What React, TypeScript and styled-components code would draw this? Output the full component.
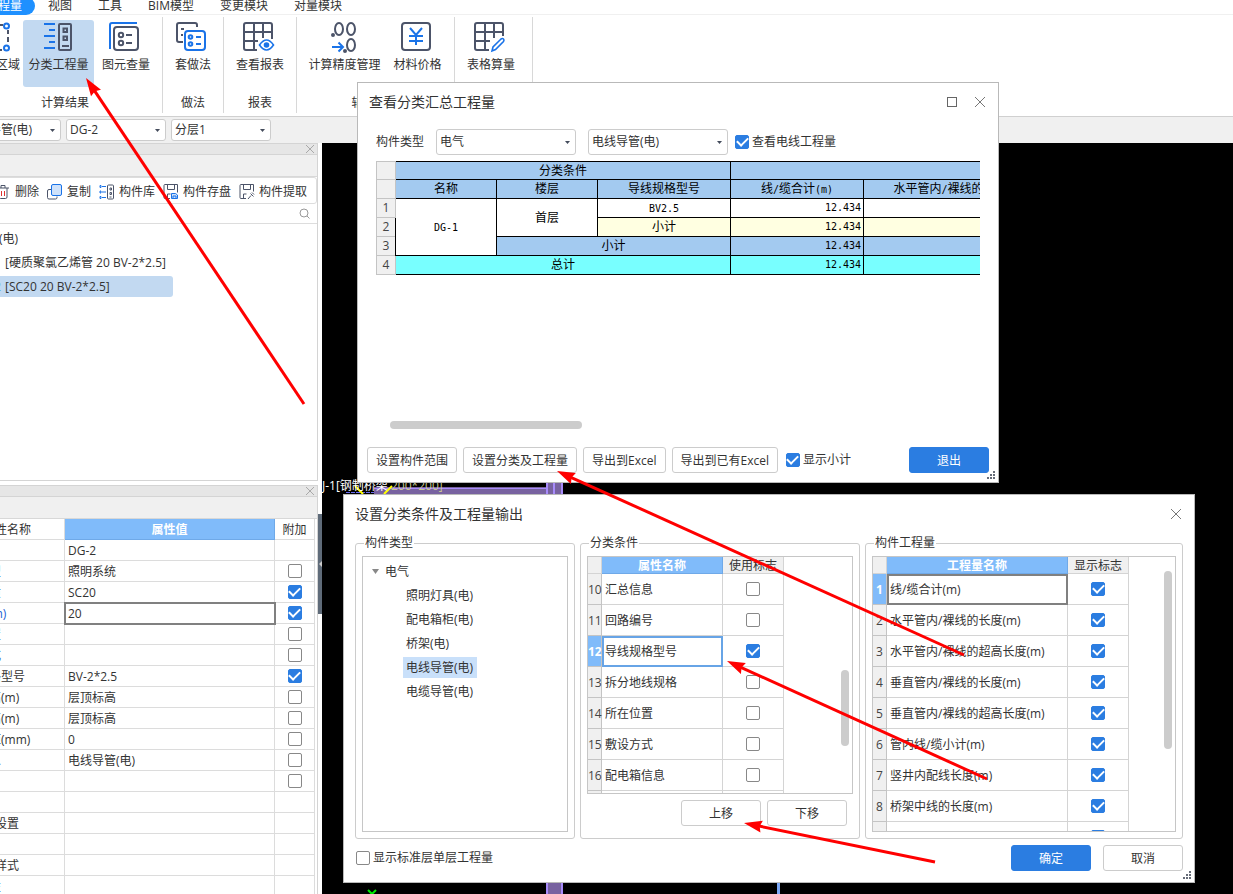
import React from 'react';
import styled, { createGlobalStyle, css } from 'styled-components';

const UI_FONT = '"Open Sans", "Noto Sans CJK SC", sans-serif';
const GRID_FONT = '"DejaVu Sans Mono", "Noto Sans CJK SC", monospace';

const GlobalStyle = createGlobalStyle`
  * { box-sizing: border-box; }
  body { margin: 0; }
  body, button, input, select, table {
    font-family: ${UI_FONT};
    font-size: 12px;
    line-height: 18px;
    color: #333;
  }
  button { padding: 0; margin: 0; cursor: default; }
`;

/* ---------- shared controls ---------- */

const Tick = styled.input.attrs({ type: 'checkbox' })`
  appearance: none;
  display: inline-grid;
  place-items: center;
  flex: none;
  width: 14px;
  height: 14px;
  margin: 0;
  border: 1px solid #888;
  border-radius: 2px;
  background: #fff;
  vertical-align: middle;
  td > & { display: grid; margin: 0 auto; }
  &:checked { background: #2b7de1; border-color: #2b7de1; }
  &:checked::before {
    content: '';
    width: 9px;
    height: 5px;
    margin-bottom: 3px;
    border-left: 2px solid #fff;
    border-bottom: 2px solid #fff;
    transform: rotate(-45deg);
  }
`;

const TickLabel = styled.label`
  display: flex;
  align-items: center;
  gap: 3px;
  white-space: nowrap;
`;

const SelectWrap = styled.span<{ $w: number; $h: number }>`
  display: grid;
  align-items: center;
  flex: none;
  width: ${(p) => p.$w}px;
  height: ${(p) => p.$h}px;
  select, svg { grid-area: 1 / 1; }
  svg { justify-self: end; margin-right: 6px; pointer-events: none; }
`;

const SelectField = styled.select`
  appearance: none;
  width: 100%;
  height: 100%;
  padding: 0 3px;
  border: 1px solid #ccc;
  border-radius: 3px;
  background: #fff;
`;

function Select({ value, label, w, h }: { value: string; label: string; w: number; h: number }) {
  return (
    <SelectWrap $w={w} $h={h}>
      <SelectField aria-label={label} defaultValue={value}>
        <option>{value}</option>
      </SelectField>
      <svg width="5" height="3" viewBox="0 0 5 3"><path d="M0 0h5L2.5 3z" fill="#444c5c" /></svg>
    </SelectWrap>
  );
}

const PushButton = styled.button<{ $primary?: boolean; $w?: number }>`
  flex: none;
  width: ${(p) => (p.$w ? `${p.$w}px` : 'auto')};
  height: 26px;
  padding: 2px 8px 0;
  border: 1px solid #ccc;
  border-radius: 3px;
  background: #fff;
  white-space: nowrap;
  ${(p) => p.$primary && css`
    background: #2b7de1;
    border-color: #2b7de1;
    color: #fff;
  `}
`;

const IconButton = styled.button`
  display: grid;
  place-items: center;
  border: 0;
  background: none;
`;

function Cross({ size = 10, color = '#777' }: { size?: number; color?: string }) {
  return (
    <svg width={size} height={size} viewBox="0 0 10 10" fill="none" stroke={color}>
      <path d="M0 0l10 10M10 0L0 10" />
    </svg>
  );
}

/* ---------- frame ---------- */

const App_ = styled.div`
  position: relative;
  display: flex;
  flex-direction: column;
  height: 100vh;
  overflow: hidden;
  background: #fff;
`;

const TabBar = styled.nav`
  display: flex;
  align-items: center;
  flex: none;
  height: 15px;
  margin-left: -27px;
  padding-bottom: 2px;
  border-bottom: 1px solid #f0f0f0;
`;

const Tab = styled.button<{ $active?: boolean }>`
  flex: none;
  height: 18px;
  padding: 0 13px;
  border: 0;
  border-radius: 9px;
  background: ${(p) => (p.$active ? '#1e90ff' : 'transparent')};
  color: ${(p) => (p.$active ? '#fff' : '#333')};
  white-space: nowrap;
`;

const Ribbon = styled.div`
  display: flex;
  flex: none;
  height: 101px;
  margin-left: -32px;
  padding: 2px 0 3px;
`;

const Group = styled.section<{ $w: number }>`
  display: flex;
  flex-direction: column;
  justify-content: space-between;
  flex: none;
  width: ${(p) => p.$w}px;
  padding: 3px 0 0;
  border-right: 1px solid #d8d8d8;
`;

const GroupRow = styled.div<{ $start?: boolean }>`
  display: flex;
  justify-content: ${(p) => (p.$start ? 'flex-start' : 'center')};
`;

const GroupName = styled.div`
  height: 20px;
  text-align: center;
  line-height: 20px;
`;

const Tool = styled.button<{ $w: number; $active?: boolean; $cut?: boolean }>`
  display: flex;
  flex-direction: column;
  align-items: ${(p) => (p.$cut ? 'flex-end' : 'center')};
  gap: 3px;
  flex: none;
  width: ${(p) => p.$w}px;
  height: 67px;
  padding: ${(p) => (p.$cut ? '0 3px 0 0' : '0')};
  border: 0;
  border-radius: 3px;
  background: ${(p) => (p.$active ? '#c2d9f1' : 'transparent')};
  white-space: nowrap;
  svg { margin-right: ${(p) => (p.$cut ? '9px' : '3px')}; }
`;

const INK = '#4c5469';
const BLUE = '#1a73e8';

type IconName = 'region' | 'classify' | 'element' | 'method' | 'report' | 'precision' | 'price' | 'sheet';

const ICONS: Record<IconName, React.ReactNode> = {
  region: (
    <g stroke={INK}>
      <path d="M18 5h7M30 10v4M30 17v5M18 30h6" />
      <circle cx="28.500" cy="6" r="2.500" stroke={BLUE} />
      <circle cx="28.500" cy="28" r="2.500" stroke={BLUE} />
    </g>
  ),
  classify: (
    <>
      <path stroke={BLUE} d="M3 4h11M8 10h6M3 16h11M8 22h6M3 28h11" />
      <g stroke={INK}>
        <rect x="18" y="4" width="12" height="26" rx="1" />
        <rect x="22.500" y="8.500" width="3.500" height="3.500" />
        <rect x="22.500" y="16.500" width="3.500" height="3.500" />
        <path d="M21 26h7" />
      </g>
    </>
  ),
  element: (
    <>
      <path stroke={BLUE} d="M2 29V5q0-2 2-2h25" />
      <g stroke={INK}>
        <rect x="6" y="7" width="24" height="23" rx="3" />
        <circle cx="13" cy="15" r="2.200" /><circle cx="13" cy="23" r="2.200" />
        <path d="M18 15h6M18 23h6" />
      </g>
    </>
  ),
  method: (
    <>
      <path stroke={INK} d="M8 22H4q-2 0-2-2V5q0-2 2-2h16q2 0 2 2v2M6 9h3M6 15h2" />
      <g stroke={BLUE}>
        <rect x="10" y="11" width="20" height="19" rx="3" />
        <circle cx="15.500" cy="17" r="1.800" /><circle cx="15.500" cy="24" r="1.800" />
        <path d="M21 17h5M21 24h5" />
      </g>
    </>
  ),
  report: (
    <>
      <path stroke={INK} d="M15 30H4q-2 0-2-2V5q0-2 2-2h24q2 0 2 2v14M2 12h28M2 21h14M12 3v27M21 3v15" />
      <g stroke={BLUE}>
        <path strokeWidth="1.600" d="M17.500 25q7-10 14 0q-7 10-14 0z" />
        <circle cx="24.500" cy="25" r="1.800" fill={BLUE} />
      </g>
    </>
  ),
  precision: (
    <>
      <g stroke={INK}>
        <ellipse cx="12" cy="9" rx="4" ry="6" /><ellipse cx="24" cy="9" rx="4" ry="6" />
        <ellipse cx="24" cy="25" rx="4" ry="6" />
        <circle cx="6" cy="15" r="1" fill={INK} /><circle cx="18" cy="31" r="1" fill={INK} />
      </g>
      <path stroke={BLUE} d="M5 27h11M11.500 22.500l4.500 4.500-4.500 4.500" />
    </>
  ),
  price: (
    <>
      <rect stroke={INK} x="2" y="3" width="28" height="27" rx="3" />
      <path stroke={BLUE} d="M10 8l6 7 6-7M9 16h14M9 21h14M16 15v10" />
    </>
  ),
  sheet: (
    <>
      <path stroke={INK} d="M16 30H4q-2 0-2-2V5q0-2 2-2h24q2 0 2 2v11M2 12h28M2 21h15M12 3v27M21 3v15" />
      <path stroke={BLUE} strokeWidth="1.600" d="M19 31l1-4 8-8q1.500-1 2.500 0t0 2.500l-8 8z" />
    </>
  ),
};

function RibbonIcon({ name }: { name: IconName }) {
  return (
    <svg width="33" height="33" viewBox="0 0 33 33" fill="none" strokeWidth="2">{ICONS[name]}</svg>
  );
}

const OptionBar = styled.div`
  display: flex;
  align-items: center;
  gap: 5px;
  flex: none;
  height: 27px;
  padding-left: 1px;
  border-top: 1px solid #d0d0d0;
  background: #f0f0f0;
  > :first-child { margin-left: -40px; }
`;

const Body = styled.main`
  display: flex;
  flex: 1;
  min-height: 0;
`;

/* ---------- left side ---------- */

const Side = styled.aside`
  display: grid;
  grid-template-columns: minmax(0, 1fr) 4px;
  flex: none;
  width: 322px;
`;

const SidePanels = styled.div`
  display: flex;
  flex-direction: column;
  gap: 4px;
  min-height: 0;
  overflow: hidden;
`;

const Splitter = styled.div`
  display: grid;
  place-items: center;
  height: 100px;
  margin-top: 371px;
  background: #5f6b79;
`;

const Panel = styled.section<{ $h?: number }>`
  display: flex;
  flex-direction: column;
  flex: none;
  height: ${(p) => (p.$h ? `${p.$h}px` : 'auto')};
  border: 1px solid #d4d4d4;
  border-left: 0;
  overflow: hidden;
`;

const PanelStrip = styled.header`
  display: flex;
  justify-content: flex-end;
  align-items: center;
  flex: none;
  height: 11px;
  padding-right: 3px;
  background: #e6e6e6;
  border-bottom: 1px solid #d4d4d4;
`;

const PanelBand = styled.div`
  flex: none;
  height: 22px;
  background: #f0f0f0;
  border-bottom: 1px solid #d8d8d8;
`;

const Commands = styled.div`
  display: flex;
  align-items: center;
  gap: 8px;
  flex: none;
  height: 27px;
  margin-left: -6px;
  padding-top: 2px;
  border: 1px solid #ddd;
  border-radius: 3px;
`;

const Command = styled.button`
  display: flex;
  align-items: center;
  gap: 4px;
  flex: none;
  border: 0;
  background: none;
  white-space: nowrap;
`;

const SearchRow = styled.label`
  display: flex;
  align-items: center;
  flex: none;
  height: 20px;
  padding-right: 7px;
  border-bottom: 1px solid #ddd;
  input { flex: 1; min-width: 0; height: 18px; border: 0; padding: 0; outline: 0; }
`;

const Tree = styled.ul`
  margin: 0;
  padding: 4px 0 0;
  list-style: none;
`;

const TreeItem = styled.li<{ $selected?: boolean; $root?: boolean }>`
  width: ${(p) => (p.$root ? 'auto' : 'max-content')};
  height: 21px;
  margin: 0 0 3px ${(p) => (p.$root ? '-49px' : '-27px')};
  padding-right: 4px;
  border-radius: 3px;
  background: ${(p) => (p.$selected ? '#c2d9f1' : 'transparent')};
  line-height: 21px;
  white-space: nowrap;
  b { display: inline-block; width: 32px; font-weight: 400; color: #58b0f0; }
`;

const TreeText = styled.span<{ $w?: number }>`
  display: inline-block;
  width: ${(p) => (p.$w ? `${p.$w}px` : 'auto')};
`;

const PropTable = styled.table`
  width: 365px;
  margin-left: -50px;
  border-collapse: separate;
  border-spacing: 0;
  table-layout: fixed;
  th, td {
    height: 21px;
    padding: 2px 3px 0;
    border-right: 1px solid #dcdcdc;
    border-bottom: 1px solid #dcdcdc;
    font-weight: 400;
    line-height: 18px;
    white-space: nowrap;
    text-align: left;
    overflow: hidden;
  }
  thead th { text-align: center; }
  td:last-child { padding-top: 0; }
`;

const ValueHead = styled.th`
  && { background: #80bbfa; color: #fff; font-weight: 700; border-color: #6fa9e8; }
`;

const NameCell = styled.th<{ $blue?: boolean; $indent?: boolean }>`
  && { padding-left: ${(p) => (p.$indent ? 21 : 3)}px; }
  color: ${(p) => (p.$blue ? '#1c5fd6' : '#333')};
`;

const ValueCell = styled.td<{ $focus?: boolean }>`
  ${(p) => p.$focus && css`
    outline: 2px solid #808080;
    outline-offset: -1px;
  `}
`;

type Prop = { name: string; value?: string; tick?: boolean; blue?: boolean; indent?: boolean; focus?: boolean };

const PROPS: Prop[] = [
  { name: '名称', value: 'DG-2', blue: true },
  { name: '系统类型', value: '照明系统', tick: false, blue: true },
  { name: '导管材质', value: 'SC20', tick: true, blue: true },
  { name: '管径(mm)', value: '20', tick: true, blue: true, focus: true },
  { name: '所在位置', tick: false, blue: true },
  { name: '敷设方式', tick: false, blue: true },
  { name: '导线规格型号', value: 'BV-2*2.5', tick: true },
  { name: '起点标高(m)', value: '层顶标高', tick: false },
  { name: '终点标高(m)', value: '层顶标高', tick: false },
  { name: '支架间距(mm)', value: '0', tick: false },
  { name: '汇总信息', value: '电线导管(电)', tick: false },
  { name: '备注', tick: false },
  { name: '计算' },
  { name: '计算设置', indent: true },
  { name: '显示' },
  { name: '显示样式', indent: true },
  { name: '填充属性', blue: true },
];

/* ---------- canvas ---------- */

const Canvas = styled.div`
  flex: 1;
  min-width: 0;
  background: #000;
  svg { display: block; }
`;

/* ---------- windows ---------- */

const Window = styled.section<{ $x: number; $y: number; $w: number }>`
  position: absolute;
  left: ${(p) => p.$x}px;
  top: ${(p) => p.$y}px;
  width: ${(p) => p.$w}px;
  border: 1px solid #b9b9b9;
  background: #fff;
`;

const TitleBar = styled.header`
  display: flex;
  align-items: center;
  gap: 18px;
  height: 38px;
  padding: 0 13px 0 11px;
  h2 { flex: 1; margin: 0; font-size: 14px; font-weight: 400; line-height: 20px; }
`;

const MaxBox = styled.span`
  width: 10px;
  height: 10px;
  border: 1px solid #666;
`;

const FilterRow = styled.div`
  display: flex;
  align-items: center;
  gap: 12px;
  padding: 8px 18px 6px;
  > :last-child { margin-left: -5px; }
`;

const SummaryArea = styled.div`
  height: 260px;
  margin: 0 18px;
  overflow: hidden;
`;

const SummaryTable = styled.table`
  width: 680px;
  border-collapse: collapse;
  table-layout: fixed;
  font-family: ${GRID_FONT};
  color: #000;
  td, thead th {
    height: 19px;
    padding: 0 2px;
    border: 1px solid #000;
    font-weight: 400;
    line-height: 16px;
    text-align: center;
    white-space: nowrap;
  }
  thead th { background: #a3caf0; }
  thead tr:first-child th { height: 18px; }
`;

const RowNo = styled.th`
  && {
    padding: 0;
    border: 1px solid #c4c4c4;
    background: #f0f0f0;
    color: #444;
    font-family: ${UI_FONT};
    font-weight: 400;
    line-height: 16px;
  }
`;

const Fill = styled.td<{ $tone?: 'sub' | 'group' | 'total'; $num?: boolean }>`
  background: ${(p) => ({ sub: '#ffffe1', group: '#a3caf0', total: '#78ffff', none: '#fff' })[p.$tone ?? 'none']};
  && { text-align: ${(p) => (p.$num ? 'right' : 'center')}; }
  font-size: ${(p) => (p.$num ? 10 : 12)}px;
`;

const Half = styled.span`
  font-size: 10px;
`;

const HBar = styled.div`
  width: 192px;
  height: 8px;
  margin: 0 0 0 32px;
  border-radius: 4px;
  background: #ccc;
`;

const ActionRow = styled.footer`
  display: flex;
  align-items: center;
  gap: 6px;
  padding: 18px 9px 9px;
  > label { margin-right: auto; padding-left: 2px; }
`;

const Grip = styled.svg`
  position: absolute;
  right: 3px;
  bottom: 3px;
`;

function SizeGrip() {
  const dots = [[6, 0], [3, 3], [6, 3], [0, 6], [3, 6], [6, 6]];
  return (
    <Grip width="8" height="8">
      {dots.map(([x, y]) => <rect key={`${x}-${y}`} x={x} y={y} width="2" height="2" fill="#666c78" />)}
    </Grip>
  );
}

function Num({ tone }: { tone?: 'sub' | 'group' | 'total' }) {
  return (
    <>
      <Fill $tone={tone} $num>12.434</Fill>
      <Fill $tone={tone} />
    </>
  );
}

function SummaryWindow() {
  return (
    <Window $x={357} $y={82} $w={642}>
      <TitleBar>
        <h2>查看分类汇总工程量</h2>
        <IconButton aria-label="最大化"><MaxBox /></IconButton>
        <IconButton aria-label="关闭"><Cross /></IconButton>
      </TitleBar>
      <FilterRow>
        <span>构件类型</span>
        <Select label="构件类型" value="电气" w={140} h={26} />
        <Select label="构件" value="电线导管(电)" w={140} h={26} />
        <TickLabel><Tick defaultChecked />查看电线工程量</TickLabel>
      </FilterRow>
      <SummaryArea>
        <SummaryTable>
          <colgroup>
            <col style={{ width: 19 }} /><col style={{ width: 101 }} /><col style={{ width: 101 }} />
            <col style={{ width: 133 }} /><col style={{ width: 133 }} /><col />
          </colgroup>
          <thead>
            <tr><RowNo /><th colSpan={3}>分类条件</th><th colSpan={2} /></tr>
            <tr>
              <RowNo /><th>名称</th><th>楼层</th><th>导线规格型号</th>
              <th>线<Half>/</Half>缆合计<Half>(m)</Half></th>
              <th>水平管内<Half>/</Half>裸线的长度<Half>(m)</Half></th>
            </tr>
          </thead>
          <tbody>
            <tr>
              <RowNo>1</RowNo>
              <Fill rowSpan={3}><Half>DG-1</Half></Fill>
              <Fill rowSpan={2}>首层</Fill>
              <Fill><Half>BV2.5</Half></Fill>
              <Num />
            </tr>
            <tr><RowNo>2</RowNo><Fill $tone="sub">小计</Fill><Num tone="sub" /></tr>
            <tr><RowNo>3</RowNo><Fill $tone="group" colSpan={2}>小计</Fill><Num tone="group" /></tr>
            <tr><RowNo>4</RowNo><Fill $tone="total" colSpan={3}>总计</Fill><Num tone="total" /></tr>
          </tbody>
        </SummaryTable>
      </SummaryArea>
      <HBar />
      <ActionRow>
        <PushButton>设置构件范围</PushButton>
        <PushButton>设置分类及工程量</PushButton>
        <PushButton>导出到Excel</PushButton>
        <PushButton>导出到已有Excel</PushButton>
        <TickLabel><Tick defaultChecked />显示小计</TickLabel>
        <PushButton $primary $w={80}>退出</PushButton>
      </ActionRow>
      <SizeGrip />
    </Window>
  );
}

const Columns = styled.div`
  display: grid;
  grid-template-columns: 220px 280px minmax(0, 1fr);
  gap: 5px;
  padding: 1px 11px 0;
`;

const Box = styled.fieldset`
  min-width: 0;
  margin: 0;
  padding: 4px 6px 6px;
  border: 1px solid #ccc;
  border-radius: 3px;
  legend { margin-left: 2px; padding: 0 1px; line-height: 18px; }
`;

const Pane = styled.div<{ $h: number }>`
  display: flex;
  height: ${(p) => p.$h}px;
  border: 1px solid #c6c6c6;
  overflow: hidden;
`;

const TypeTree = styled.ul`
  margin: 0;
  padding: 2px 0 0 9px;
  list-style: none;
  ul { margin: 0; padding: 0 0 0 31px; list-style: none; }
  li { line-height: 24px; }
`;

const Caption = styled.span<{ $selected?: boolean }>`
  display: inline-block;
  height: 21px;
  padding: 0 4px 0 3px;
  background: ${(p) => (p.$selected ? '#c9e0fa' : 'transparent')};
  line-height: 21px;
  vertical-align: middle;
  svg { margin: 0 6px 2px -3px; }
`;

const FlagTable = styled.table`
  flex: none;
  width: max-content;
  height: max-content;
  border-collapse: separate;
  border-spacing: 0;
  table-layout: fixed;
  td, th {
    height: 31px;
    padding: 2px 0 0;
    border-right: 1px solid #d4d4d4;
    border-bottom: 1px solid #d4d4d4;
    font-weight: 400;
    text-align: center;
    white-space: nowrap;
  }
  td:last-child { padding: 0; }
  thead th { height: 17px; padding: 1px 0 0; line-height: 15px; background: #f0f0f0; }
`;

const FlagHead = styled.th`
  && { background: #80bbfa; color: #fff; font-weight: 700; border-color: #6fa9e8; }
`;

const FlagNo = styled.th<{ $on?: boolean }>`
  background: ${(p) => (p.$on ? '#80bbfa' : '#f0f0f0')};
  color: ${(p) => (p.$on ? '#fff' : '#444')};
  && { font-weight: ${(p) => (p.$on ? 700 : 400)}; border-color: #c4c4c4; }
`;

const FlagName = styled.td<{ $edge?: string }>`
  && {
    padding-left: 3px;
    text-align: left;
    ${(p) => p.$edge && css`
      outline: 2px solid ${p.$edge};
      outline-offset: -2px;
    `}
  }
`;

const VTrack = styled.div<{ $top: number }>`
  display: flex;
  flex: 1;
  justify-content: flex-end;
  padding: ${(p) => p.$top}px 3px 0 0;
`;

const VThumb = styled.div<{ $h: number }>`
  width: 8px;
  height: ${(p) => p.$h}px;
  border-radius: 4px;
  background: #ccc;
`;

type Flag = [no: string, name: string, on: boolean];

const CONDITIONS: Flag[] = [
  ['10', '汇总信息', false],
  ['11', '回路编号', false],
  ['12', '导线规格型号', true],
  ['13', '拆分地线规格', false],
  ['14', '所在位置', false],
  ['15', '敷设方式', false],
  ['16', '配电箱信息', false],
  ['', '', false],
];

const QUANTITIES: Flag[] = [
  ['1', '线/缆合计(m)', true],
  ['2', '水平管内/裸线的长度(m)', true],
  ['3', '水平管内/裸线的超高长度(m)', true],
  ['4', '垂直管内/裸线的长度(m)', true],
  ['5', '垂直管内/裸线的超高长度(m)', true],
  ['6', '管内线/缆小计(m)', true],
  ['7', '竖井内配线长度(m)', true],
  ['8', '桥架中线的长度(m)', true],
  ['', '', true],
];

function Flags({ rows, head, flag, nameW, current, edge }: {
  rows: Flag[]; head: string; flag: string; nameW: number; current: string; edge: string;
}) {
  return (
    <FlagTable style={{ width: nameW + 75 }}>
      <colgroup><col style={{ width: 14 }} /><col style={{ width: nameW }} /><col style={{ width: 61 }} /></colgroup>
      <thead><tr><th /><FlagHead>{head}</FlagHead><th>{flag}</th></tr></thead>
      <tbody>
        {rows.map(([no, name, on]) => (
          <tr key={no}>
            <FlagNo $on={no === current}>{no}</FlagNo>
            <FlagName $edge={no === current ? edge : undefined}>{name}</FlagName>
            <td><Tick defaultChecked={on} aria-label={name || flag} /></td>
          </tr>
        ))}
      </tbody>
    </FlagTable>
  );
}

const MoveRow = styled.div`
  display: flex;
  justify-content: flex-end;
  gap: 6px;
  padding: 6px 6px 0 0;
`;

const ConfirmRow = styled.footer`
  display: flex;
  align-items: center;
  gap: 12px;
  padding: 6px 11px 11px 12px;
  > label { margin-right: auto; }
`;

function OutputWindow() {
  return (
    <Window $x={343} $y={494} $w={852}>
      <TitleBar>
        <h2>设置分类条件及工程量输出</h2>
        <IconButton aria-label="关闭"><Cross /></IconButton>
      </TitleBar>
      <Columns>
        <Box>
          <legend>构件类型</legend>
          <Pane $h={276}>
            <TypeTree>
              <li>
                <Caption>
                  <svg width="7" height="5" viewBox="0 0 7 5"><path d="M0 0h7L3.500 5z" fill="#888" /></svg>
                  电气
                </Caption>
                <ul>
                  <li><Caption>照明灯具(电)</Caption></li>
                  <li><Caption>配电箱柜(电)</Caption></li>
                  <li><Caption>桥架(电)</Caption></li>
                  <li><Caption $selected>电线导管(电)</Caption></li>
                  <li><Caption>电缆导管(电)</Caption></li>
                </ul>
              </li>
            </TypeTree>
          </Pane>
        </Box>
        <Box>
          <legend>分类条件</legend>
          <Pane $h={238}>
            <Flags rows={CONDITIONS} head="属性名称" flag="使用标志" nameW={121} current="12" edge="#67a4e6" />
            <VTrack $top={113}><VThumb $h={76} /></VTrack>
          </Pane>
          <MoveRow>
            <PushButton $w={80}>上移</PushButton>
            <PushButton $w={80}>下移</PushButton>
          </MoveRow>
        </Box>
        <Box>
          <legend>构件工程量</legend>
          <Pane $h={276}>
            <Flags rows={QUANTITIES} head="工程量名称" flag="显示标志" nameW={181} current="1" edge="#808080" />
            <VTrack $top={14}><VThumb $h={178} /></VTrack>
          </Pane>
        </Box>
      </Columns>
      <ConfirmRow>
        <TickLabel><Tick />显示标准层单层工程量</TickLabel>
        <PushButton $primary $w={80}>确定</PushButton>
        <PushButton $w={80}>取消</PushButton>
      </ConfirmRow>
      <SizeGrip />
    </Window>
  );
}

/* ---------- red arrows ---------- */

const Overlay = styled.svg`
  position: absolute;
  left: 0;
  top: 0;
  pointer-events: none;
`;

const ARROWS = [
  [304, 404, 86, 78],
  [964, 655, 557, 471],
  [987, 779, 727, 661],
  [935, 862, 744, 823],
];

function Arrow({ pts: [x1, y1, x2, y2] }: { pts: number[] }) {
  const len = Math.hypot(x2 - x1, y2 - y1);
  const ux = (x2 - x1) / len;
  const uy = (y2 - y1) / len;
  const at = (back: number, side: number) => `${x2 - ux * back - uy * side},${y2 - uy * back + ux * side}`;
  return (
    <>
      <line x1={x1} y1={y1} x2={x2 - ux * 14} y2={y2 - uy * 14} stroke="#f00" strokeWidth="3" />
      <polygon points={`${x2},${y2} ${at(18, 6)} ${at(16, 0)} ${at(18, -6)}`} fill="#f00" />
    </>
  );
}

const COMMANDS: [string, React.ReactNode][] = [
  ['删除', (
    <g key="i" stroke={INK}><path d="M2 4h12M4 4v9q0 1.500 1.500 1.500h5Q12 14.500 12 13V4M6 4V1.500h4V4" /><path stroke="#d33" d="M6.500 7v5M9.500 7v5" /></g>
  )],
  ['复制', (
    <g key="i"><path stroke={INK} d="M4 5.500H2Q.500 5.500.500 7v6.500Q.500 15 2 15h6.500q1.500 0 1.500-1.500v-1" /><rect x="4.500" y=".500" width="10" height="11" rx="1.500" stroke={BLUE} fill="#cfe2fb" /></g>
  )],
  ['构件库', (
    <g key="i"><path stroke={BLUE} d="M3 2.500h4M3 8h4M3 13.500h4" /><path stroke={BLUE} d="M1 1.500v2h1v-2zM1 7v2h1V7zM1 12.500v2h1v-2z" /><rect x="8.500" y="1" width="6" height="14" rx="1" stroke={INK} /><path stroke={INK} d="M11 4h1.500v2H11zM11 8.500h1.500v2H11zM10.500 13h2" /></g>
  )],
  ['构件存盘', (
    <g key="i"><path stroke={INK} d="M7 14.500H2q-1 0-1-1v-12q0-1 1-1h12.500v8M4.500 1v4.500h7V1M4.500 14v-4h3" /><path stroke={BLUE} fill="#cfe2fb" d="M8.500 9.500h4l2 1.500v3.500h-6zM10 14v-2h3v2" /></g>
  )],
  ['构件提取', (
    <g key="i"><path stroke={INK} d="M7 14.500H2q-1 0-1-1v-12q0-1 1-1h12.500v7M4.500 1v4.500h7V1M4.500 14v-4h3" /><path stroke={INK} d="M9 15l3-3.500M11.500 9.500l3 3M13 8.500l2 2" /></g>
  )],
];

export default function App() {
  return (
    <App_>
      <GlobalStyle />
      <TabBar>
        <Tab $active>工程量</Tab>
        <Tab>视图</Tab>
        <Tab>工具</Tab>
        <Tab>BIM模型</Tab>
        <Tab>变更模块</Tab>
        <Tab>对量模块</Tab>
      </TabBar>
      <Ribbon>
        <Group $w={195}>
          <GroupRow $start>
            <Tool $w={55} $cut><RibbonIcon name="region" />区域</Tool>
            <Tool $w={71} $active><RibbonIcon name="classify" />分类工程量</Tool>
            <Tool $w={64}><RibbonIcon name="element" />图元查量</Tool>
          </GroupRow>
          <GroupName>计算结果</GroupName>
        </Group>
        <Group $w={61}>
          <GroupRow><Tool $w={50}><RibbonIcon name="method" />套做法</Tool></GroupRow>
          <GroupName>做法</GroupName>
        </Group>
        <Group $w={73}>
          <GroupRow><Tool $w={60}><RibbonIcon name="report" />查看报表</Tool></GroupRow>
          <GroupName>报表</GroupName>
        </Group>
        <Group $w={158}>
          <GroupRow>
            <Tool $w={84}><RibbonIcon name="precision" />计算精度管理</Tool>
            <Tool $w={62}><RibbonIcon name="price" />材料价格</Tool>
          </GroupRow>
          <GroupName>辅助计算</GroupName>
        </Group>
        <Group $w={78}>
          <GroupRow $start><Tool $w={72}><RibbonIcon name="sheet" />表格算量</Tool></GroupRow>
        </Group>
      </Ribbon>
      <OptionBar>
        <Select label="构件类型" value="电线导管(电)" w={100} h={22} />
        <Select label="构件" value="DG-2" w={100} h={22} />
        <Select label="分层" value="分层1" w={100} h={22} />
      </OptionBar>
      <Body>
        <Side>
          <SidePanels>
            <Panel $h={338}>
              <PanelStrip><IconButton aria-label="关闭"><Cross size={8} color="#999" /></IconButton></PanelStrip>
              <PanelBand />
              <Commands>
                {COMMANDS.map(([name, icon]) => (
                  <Command key={name}>
                    <svg width="16" height="16" viewBox="0 0 16 16" fill="none">{icon}</svg>
                    {name}
                  </Command>
                ))}
              </Commands>
              <SearchRow>
                <input aria-label="搜索" />
                <svg width="11" height="11" viewBox="0 0 11 11" fill="none" stroke="#999">
                  <circle cx="5" cy="5" r="4" /><path d="M8 8l2.500 2.500" />
                </svg>
              </SearchRow>
              <Tree>
                <TreeItem $root>电线导管(电)</TreeItem>
                <TreeItem><b>DG-1</b>[硬质聚氯乙烯管 20 BV-2*2.5]</TreeItem>
                <TreeItem $selected><b>DG-2</b><TreeText $w={164}>[SC20 20 BV-2*2.5]</TreeText></TreeItem>
              </Tree>
            </Panel>
            <Panel>
              <PanelStrip><IconButton aria-label="关闭"><Cross size={8} color="#999" /></IconButton></PanelStrip>
              <PanelBand />
              <PropTable>
                <colgroup><col style={{ width: 115 }} /><col style={{ width: 210 }} /><col style={{ width: 40 }} /></colgroup>
                <thead><tr><th>属性名称</th><ValueHead>属性值</ValueHead><th>附加</th></tr></thead>
                <tbody>
                  {PROPS.map((p) => (
                    <tr key={p.name}>
                      <NameCell $blue={p.blue} $indent={p.indent}>{p.name}</NameCell>
                      <ValueCell $focus={p.focus}>{p.value}</ValueCell>
                      <td>{p.tick !== undefined && <Tick defaultChecked={p.tick} aria-label={p.name} />}</td>
                    </tr>
                  ))}
                </tbody>
              </PropTable>
            </Panel>
          </SidePanels>
          <Splitter>
            <svg width="3" height="6" viewBox="0 0 3 6"><path d="M3 0v6L0 3z" fill="#ccc" /></svg>
          </Splitter>
        </Side>
        <Canvas>
          <svg width="911" height="751">
            <rect x="52" y="344" width="189" height="8" fill="#7862a0" />
            <path d="M52 345.500h175" stroke="#a78bfa" />
            <path d="M24 349.500h28" stroke="#6a6af0" strokeDasharray="4 1" />
            <rect x="225" y="335" width="16" height="416" fill="#7862a0" />
            <path d="M225 335v416M240 335v416M232 335v16" stroke="#a78bfa" strokeWidth="2" />
            <path d="M33 343l8 8M70 343l-8 8" stroke="#ff0" strokeWidth="2" />
            <rect x="455" y="735" width="3" height="16" fill="#7ba7f5" />
            <path d="M46 747l4 4 4-4" stroke="#0e0" strokeWidth="2" fill="none" />
            <text x="0" y="347" fill="#fff" fontSize="12">J-1[钢制桥架 <tspan fill="#c8c890">200*200]</tspan></text>
          </svg>
        </Canvas>
      </Body>
      <SummaryWindow />
      <OutputWindow />
      <Overlay width="1000" height="880">
        {ARROWS.map((pts) => <Arrow key={pts.join()} pts={pts} />)}
      </Overlay>
    </App_>
  );
}
